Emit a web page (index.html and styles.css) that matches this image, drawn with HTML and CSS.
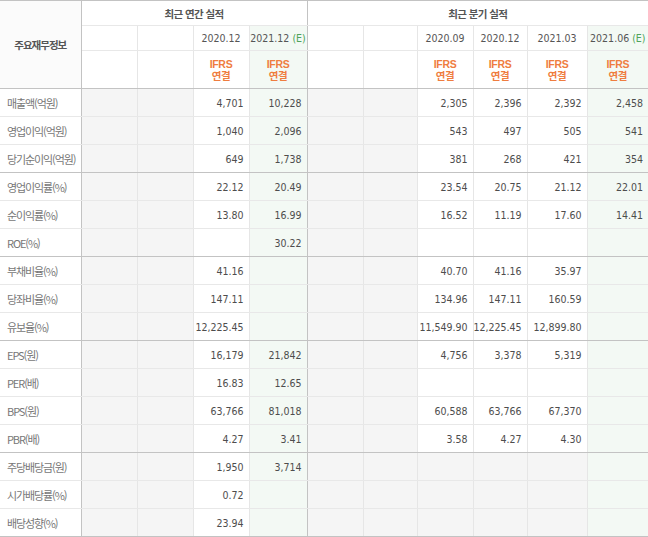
FILE: index.html
```html
<!DOCTYPE html>
<html lang="ko">
<head>
<meta charset="utf-8">
<link rel="stylesheet" href="styles.css">
</head>
<body>
<table class="fin">
  <colgroup>
    <col class="c-lbl"><col class="c56"><col class="c56"><col class="c56"><col class="c58">
    <col class="c56"><col class="c54"><col class="c56"><col class="c54"><col class="c60"><col class="c61">
  </colgroup>
  <thead>
    <tr class="h1">
      <th rowspan="3" class="lbl-h">주요재무정보</th>
      <th colspan="4" class="grp gend">최근 연간 실적</th>
      <th colspan="6" class="grp last">최근 분기 실적</th>
    </tr>
    <tr class="h2">
      <th></th><th></th><th class="per">2020.12</th><th class="per est gend">2021.12 <em>(E)</em></th>
      <th></th><th></th><th class="per">2020.09</th><th class="per">2020.12</th><th class="per">2021.03</th><th class="per est last">2021.06 <em>(E)</em></th>
    </tr>
    <tr class="h3">
      <th></th><th></th><th class="ifrs">IFRS<br>연결</th><th class="ifrs est gend">IFRS<br>연결</th>
      <th></th><th></th><th class="ifrs">IFRS<br>연결</th><th class="ifrs">IFRS<br>연결</th><th class="ifrs">IFRS<br>연결</th><th class="ifrs est last">IFRS<br>연결</th>
    </tr>
  </thead>
  <tbody>
    <tr><th>매출액(억원)</th><td class="g"></td><td class="g"></td><td>4,701</td><td class="est gend">10,228</td><td class="g"></td><td class="g"></td><td>2,305</td><td>2,396</td><td>2,392</td><td class="est last">2,458</td></tr>
    <tr><th>영업이익(억원)</th><td class="g"></td><td class="g"></td><td>1,040</td><td class="est gend">2,096</td><td class="g"></td><td class="g"></td><td>543</td><td>497</td><td>505</td><td class="est last">541</td></tr>
    <tr class="sep"><th>당기순이익(억원)</th><td class="g"></td><td class="g"></td><td>649</td><td class="est gend">1,738</td><td class="g"></td><td class="g"></td><td>381</td><td>268</td><td>421</td><td class="est last">354</td></tr>
    <tr><th>영업이익률(%)</th><td class="g"></td><td class="g"></td><td>22.12</td><td class="est gend">20.49</td><td class="g"></td><td class="g"></td><td>23.54</td><td>20.75</td><td>21.12</td><td class="est last">22.01</td></tr>
    <tr><th>순이익률(%)</th><td class="g"></td><td class="g"></td><td>13.80</td><td class="est gend">16.99</td><td class="g"></td><td class="g"></td><td>16.52</td><td>11.19</td><td>17.60</td><td class="est last">14.41</td></tr>
    <tr class="sep"><th>ROE(%)</th><td class="g"></td><td class="g"></td><td></td><td class="est gend">30.22</td><td class="g"></td><td class="g"></td><td></td><td></td><td></td><td class="est last"></td></tr>
    <tr><th>부채비율(%)</th><td class="g"></td><td class="g"></td><td>41.16</td><td class="est gend"></td><td class="g"></td><td class="g"></td><td>40.70</td><td>41.16</td><td>35.97</td><td class="est last"></td></tr>
    <tr><th>당좌비율(%)</th><td class="g"></td><td class="g"></td><td>147.11</td><td class="est gend"></td><td class="g"></td><td class="g"></td><td>134.96</td><td>147.11</td><td>160.59</td><td class="est last"></td></tr>
    <tr class="sep"><th>유보율(%)</th><td class="g"></td><td class="g"></td><td>12,225.45</td><td class="est gend"></td><td class="g"></td><td class="g"></td><td>11,549.90</td><td>12,225.45</td><td>12,899.80</td><td class="est last"></td></tr>
    <tr><th>EPS(원)</th><td class="g"></td><td class="g"></td><td>16,179</td><td class="est gend">21,842</td><td class="g"></td><td class="g"></td><td>4,756</td><td>3,378</td><td>5,319</td><td class="est last"></td></tr>
    <tr><th>PER(배)</th><td class="g"></td><td class="g"></td><td>16.83</td><td class="est gend">12.65</td><td class="g"></td><td class="g"></td><td></td><td></td><td></td><td class="est last"></td></tr>
    <tr><th>BPS(원)</th><td class="g"></td><td class="g"></td><td>63,766</td><td class="est gend">81,018</td><td class="g"></td><td class="g"></td><td>60,588</td><td>63,766</td><td>67,370</td><td class="est last"></td></tr>
    <tr class="sep"><th>PBR(배)</th><td class="g"></td><td class="g"></td><td>4.27</td><td class="est gend">3.41</td><td class="g"></td><td class="g"></td><td>3.58</td><td>4.27</td><td>4.30</td><td class="est last"></td></tr>
    <tr><th>주당배당금(원)</th><td class="g"></td><td class="g"></td><td>1,950</td><td class="est gend">3,714</td><td class="g"></td><td class="g"></td><td class="g"></td><td class="g"></td><td class="g"></td><td class="est last"></td></tr>
    <tr><th>시가배당률(%)</th><td class="g"></td><td class="g"></td><td>0.72</td><td class="est gend"></td><td class="g"></td><td class="g"></td><td class="g"></td><td class="g"></td><td class="g"></td><td class="est last"></td></tr>
    <tr class="sep"><th>배당성향(%)</th><td class="g"></td><td class="g"></td><td>23.94</td><td class="est gend"></td><td class="g"></td><td class="g"></td><td class="g"></td><td class="g"></td><td class="g"></td><td class="est last"></td></tr>
  </tbody>
</table>
</body>
</html>
```

FILE: styles.css
```css
html, body {
  margin: 0;
  padding: 0;
  background: #fff;
}

.fin {
  width: 648px;
  table-layout: fixed;
  border-collapse: collapse;
  border-top: 1px solid #c3c3c3;
  border-bottom: 1px solid #c3c3c3;
  font-family: "DejaVu Sans Condensed", "DejaVu Sans", sans-serif;
  font-stretch: condensed;
  font-size: 10.5px;
  color: #4d4d4d;
}

.c-lbl { width: 81px; }
.c54 { width: 54px; }
.c56 { width: 56px; }
.c58 { width: 58px; }
.c60 { width: 60px; }
.c61 { width: 61px; }

.fin th, .fin td {
  padding: 0 5px 0 0;
  border-right: 1px solid #e6e6e6;
  border-bottom: 1px solid #e8e8e8;
  white-space: nowrap;
  overflow: hidden;
}

.fin td {
  height: 27px;
  text-align: right;
}

.fin .last { border-right: none; }
.fin .gend { border-right: 1px solid #c3c3c3; }

/* header */
.fin thead th {
  font-weight: normal;
  text-align: center;
  padding: 0;
  background: #fff;
}

.fin .h1 th { height: 24px; }
.fin .h2 th { height: 24px; }
.fin .h3 th { height: 37px; border-bottom: 1px solid #c3c3c3; }

.fin .lbl-h {
  font-family: "Noto Sans CJK KR", sans-serif;
  font-weight: bold;
  font-size: 10.5px;
  letter-spacing: -1px;
  color: #555;
  background: #fbfbfb;
  border-right: 1px solid #c3c3c3;
  border-bottom: 1px solid #c3c3c3;
}

.fin .grp {
  font-family: "Noto Sans CJK KR", sans-serif;
  font-weight: bold;
  font-size: 10.5px;
  letter-spacing: -0.6px;
  color: #555;
}

.fin .per {
  color: #555;
}

.fin .per em {
  font-style: normal;
  color: #4ea35a;
}

.fin .ifrs {
  font-family: "Liberation Sans", "Noto Sans CJK KR", sans-serif;
  font-weight: bold;
  font-size: 10.5px;
  line-height: 12px;
  color: #ef7d3f;
  letter-spacing: -0.3px;
}

.fin .est,
.fin thead th.est {
  background: #f3f9f4;
}

/* body */
.fin tbody th {
  font-family: "Noto Sans CJK KR", sans-serif;
  font-weight: normal;
  font-size: 11px;
  letter-spacing: -1.1px;
  color: #777;
  text-align: left;
  padding-left: 7px;
  border-right: 1px solid #c3c3c3;
  background: #fff;
}

.fin .g {
  background: #f5f5f5;
}

.fin .sep th, .fin .sep td {
  border-bottom: 1px solid #c3c3c3;
}
```
